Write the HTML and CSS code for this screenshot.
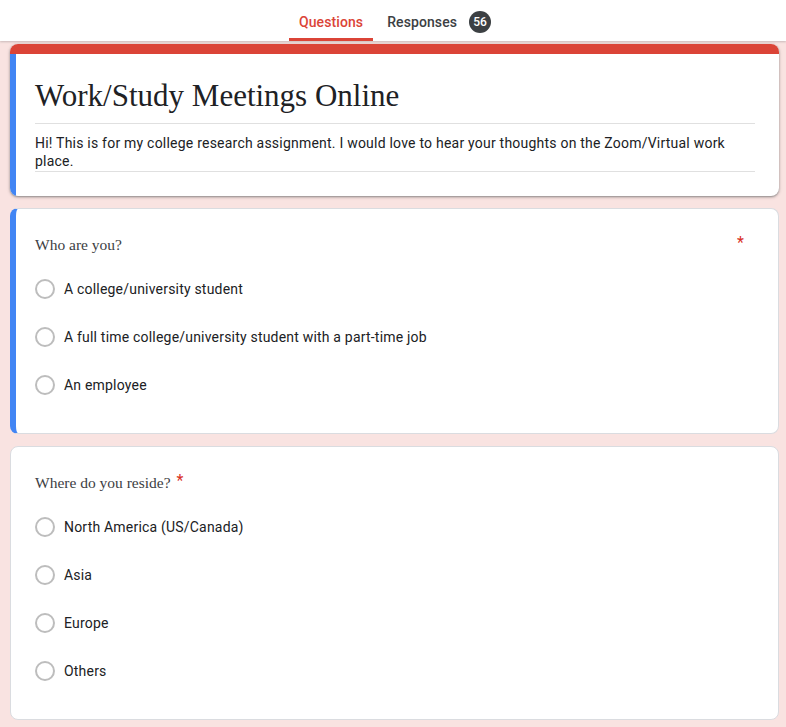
FILE: index.html
```html
<!DOCTYPE html>
<html>
<head>
<meta charset="utf-8">
<link rel="stylesheet" href="styles.css">
</head>
<body>
<header class="topbar">
  <nav class="tabs">
    <div class="tab tab-active">Questions</div>
    <div class="tab">Responses <span class="badge">56</span></div>
  </nav>
</header>
<main class="page">
  <section class="card title-card">
    <div class="title-accent"></div>
    <div class="title-body">
      <h1 class="form-title">Work/Study Meetings Online</h1>
      <p class="form-desc">Hi! This is for my college research assignment. I would love to hear your thoughts on the Zoom/Virtual work place.</p>
    </div>
  </section>

  <section class="card question active">
    <div class="q-head q-head-split">
      <span class="q-text">Who are you?</span>
      <span class="req req-right">*</span>
    </div>
    <div class="option"><span class="radio"></span><span class="opt-label">A college/university student</span></div>
    <div class="option"><span class="radio"></span><span class="opt-label">A full time college/university student with a part-time job</span></div>
    <div class="option"><span class="radio"></span><span class="opt-label">An employee</span></div>
  </section>

  <section class="card question">
    <div class="q-head">
      <span class="q-text">Where do you reside?</span>
      <span class="req">*</span>
    </div>
    <div class="option"><span class="radio"></span><span class="opt-label">North America (US/Canada)</span></div>
    <div class="option"><span class="radio"></span><span class="opt-label">Asia</span></div>
    <div class="option"><span class="radio"></span><span class="opt-label">Europe</span></div>
    <div class="option"><span class="radio"></span><span class="opt-label">Others</span></div>
  </section>
</main>
</body>
</html>
```
FILE: styles.css
```css
* { box-sizing: border-box; }
html, body { margin: 0; padding: 0; }
body {
  background: #f9e3e1;
  font-family: Roboto, "Liberation Sans", Arial, sans-serif;
  color: #202124;
  overflow: hidden;
}
.topbar {
  height: 41px;
  background: #fff;
  box-shadow: 0 1px 2px rgba(60, 64, 67, 0.25);
  display: flex;
  justify-content: center;
  position: relative;
  z-index: 1;
}
.tabs {
  display: flex;
  gap: 4px;
  height: 41px;
  margin-left: 4px;
}
.tab {
  display: flex;
  align-items: center;
  padding: 3px 10px 0 10px;
  font-size: 14px;
  font-weight: 500;
  color: #3c4043;
  height: 41px;
  letter-spacing: 0.1px;
}
.tab-active {
  color: #db4437;
  border-bottom: 3px solid #db4437;
  border-radius: 3px 3px 0 0;
  padding-top: 6px;
}
.badge {
  display: inline-flex;
  align-items: center;
  justify-content: center;
  width: 22px;
  height: 22px;
  border-radius: 50%;
  background: #3c4043;
  color: #fff;
  font-size: 12px;
  font-weight: 500;
  margin-left: 12px;
}
.page {
  padding: 3px 0 0 10px;
  width: 779px;
  display: flex;
  flex-direction: column;
  gap: 12px;
}
.card {
  background: #fff;
  border-radius: 8px;
}
.title-card {
  overflow: hidden;
  box-shadow: 0 1px 2px rgba(60, 64, 67, 0.45), 0 1px 3px 1px rgba(60, 64, 67, 0.15);
}
.title-accent {
  height: 10px;
  background: #db4437;
}
.title-body {
  border-left: 6px solid #4285f4;
  padding: 22px 24px 24px 19px;
}
.form-title {
  margin: 0;
  font-family: "Liberation Serif", "Times New Roman", serif;
  font-weight: 400;
  font-size: 31px;
  line-height: 40px;
  color: #202124;
  padding-bottom: 7px;
  border-bottom: 1px solid #e0e0e0;
}
.form-desc {
  margin: 10px 0 0 0;
  font-size: 14px;
  line-height: 18px;
  letter-spacing: 0.22px;
  color: #202124;
  padding-bottom: 1px;
  border-bottom: 1px solid #e0e0e0;
}
.question {
  border: 1px solid #dadce0;
  padding: 24px 24px 24px 24px;
}
.question.active {
  border-left: 6px solid #4285f4;
  padding-left: 19px;
}
.q-head {
  display: flex;
  align-items: flex-start;
  height: 24px;
  margin-bottom: 8px;
}
.q-head-split { justify-content: space-between; }
.q-text {
  font-family: "Liberation Serif", "Times New Roman", serif;
  font-size: 15.5px;
  line-height: 24px;
  color: #3c4043;
}
.req {
  color: #d93025;
  font-size: 16px;
  line-height: 20px;
  margin-left: 6px;
}
.req-right { margin-right: 10px; }
.option {
  display: flex;
  align-items: center;
  height: 48px;
}
.radio {
  width: 20px;
  height: 20px;
  border: 2px solid #bdbdbd;
  border-radius: 50%;
  flex: none;
}
.opt-label {
  margin-left: 9px;
  font-size: 14px;
  color: #202124;
  letter-spacing: 0.2px;
}
```
